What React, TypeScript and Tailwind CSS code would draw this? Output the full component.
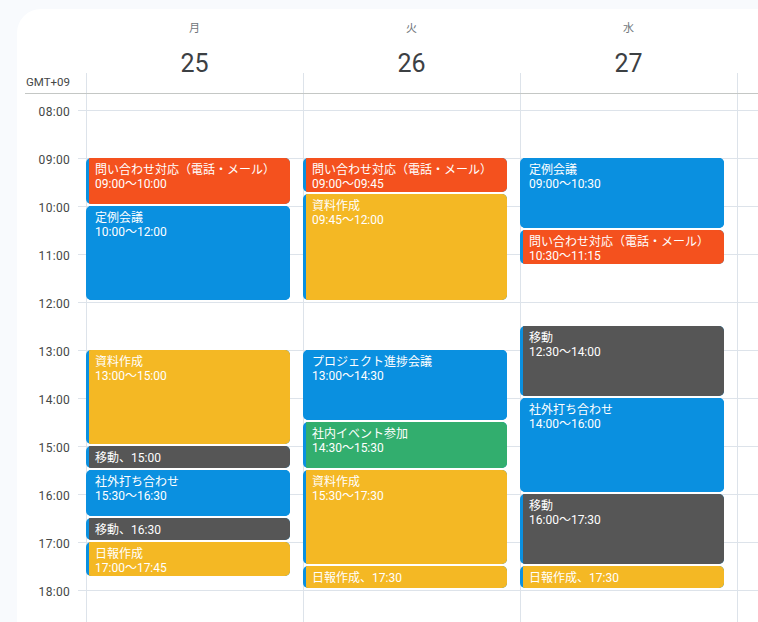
import React from "react";

type Ev = {
  title: string;
  start: number; // hours, decimal
  end: number;
  color: string;
  label?: string; // time range shown on second line
  inline?: string; // time shown after the title on one line
};

const HOUR_PX = 48;
const FIRST_HOUR = 8;
const TOP_OFFSET = 16;

const RED = "bg-[#f4511e]";
const BLUE = "bg-[#0a90e0]";
const YELLOW = "bg-[#f4b824]";
const GRAY = "bg-[#565656]";
const GREEN = "bg-[#32ae6e]";

const days: { wd: string; day: string; events: Ev[] }[] = [
  {
    wd: "月",
    day: "25",
    events: [
      { title: "問い合わせ対応（電話・メール）", start: 9, end: 10, color: RED, label: "09:00〜10:00" },
      { title: "定例会議", start: 10, end: 12, color: BLUE, label: "10:00〜12:00" },
      { title: "資料作成", start: 13, end: 15, color: YELLOW, label: "13:00〜15:00" },
      { title: "移動", start: 15, end: 15.5, color: GRAY, inline: "15:00" },
      { title: "社外打ち合わせ", start: 15.5, end: 16.5, color: BLUE, label: "15:30〜16:30" },
      { title: "移動", start: 16.5, end: 17, color: GRAY, inline: "16:30" },
      { title: "日報作成", start: 17, end: 17.75, color: YELLOW, label: "17:00〜17:45" },
    ],
  },
  {
    wd: "火",
    day: "26",
    events: [
      { title: "問い合わせ対応（電話・メール）", start: 9, end: 9.75, color: RED, label: "09:00〜09:45" },
      { title: "資料作成", start: 9.75, end: 12, color: YELLOW, label: "09:45〜12:00" },
      { title: "プロジェクト進捗会議", start: 13, end: 14.5, color: BLUE, label: "13:00〜14:30" },
      { title: "社内イベント参加", start: 14.5, end: 15.5, color: GREEN, label: "14:30〜15:30" },
      { title: "資料作成", start: 15.5, end: 17.5, color: YELLOW, label: "15:30〜17:30" },
      { title: "日報作成", start: 17.5, end: 18, color: YELLOW, inline: "17:30" },
    ],
  },
  {
    wd: "水",
    day: "27",
    events: [
      { title: "定例会議", start: 9, end: 10.5, color: BLUE, label: "09:00〜10:30" },
      { title: "問い合わせ対応（電話・メール）", start: 10.5, end: 11.25, color: RED, label: "10:30〜11:15" },
      { title: "移動", start: 12.5, end: 14, color: GRAY, label: "12:30〜14:00" },
      { title: "社外打ち合わせ", start: 14, end: 16, color: BLUE, label: "14:00〜16:00" },
      { title: "移動", start: 16, end: 17.5, color: GRAY, label: "16:00〜17:30" },
      { title: "日報作成", start: 17.5, end: 18, color: YELLOW, inline: "17:30" },
    ],
  },
];

const hours = Array.from({ length: 11 }, (_, i) => i + FIRST_HOUR);

function EventBlock({ ev }: { ev: Ev }) {
  const top = TOP_OFFSET + (ev.start - FIRST_HOUR) * HOUR_PX;
  const height = (ev.end - ev.start) * HOUR_PX - 2;
  return (
    <div
      className="absolute left-[-1px] right-[13px] flex overflow-hidden rounded-[5px] bg-[#0a90e0]"
      style={{ top, height }}
    >
      <div className={`ml-[3px] flex-1 overflow-hidden pl-[6px] pt-[5px] text-[12px] leading-[14px] text-white whitespace-nowrap ${ev.color}`}>
        {ev.inline ? (
          <div>
            {ev.title}、{ev.inline}
          </div>
        ) : (
          <>
            <div>{ev.title}</div>
            <div>{ev.label}</div>
          </>
        )}
      </div>
    </div>
  );
}

function DayColumn({ events }: { events: Ev[] }) {
  return (
    <div className="relative w-[217px] shrink-0 border-l border-[#dde3ea]">
      <div className="h-[16px]" />
      {hours.map((h) => (
        <div key={h} className="h-[48px] border-t border-[#dde3ea]" />
      ))}
      {events.map((ev, i) => (
        <EventBlock key={i} ev={ev} />
      ))}
    </div>
  );
}

export default function App() {
  return (
    <div className="h-[622px] w-[758px] overflow-hidden bg-[#f8fafd] pl-[17px] pt-[9px] font-['Roboto','Noto_Sans_CJK_JP',sans-serif]">
      <div className="w-[820px] h-[700px] rounded-tl-[24px] bg-white">
        {/* day headers */}
        <div className="flex h-[64px]">
          <div className="w-[69px] shrink-0" />
          {days.map((d) => (
            <div key={d.day} className="flex w-[217px] shrink-0 flex-col items-center pt-[13px]">
              <div className="text-[11px] leading-[14px] text-[#70757a]">{d.wd}</div>
              <div className="mt-[12px] text-[25px] leading-[32px] text-[#3c4043]">{d.day}</div>
            </div>
          ))}
        </div>

        {/* all-day row */}
        <div className="ml-[8px] flex h-[21px] border-b border-[#c4c7c5]">
          <div className="flex w-[61px] shrink-0 items-center justify-end pr-[16px] text-[11.5px] text-[#444746]">
            GMT+09
          </div>
          {[0, 1, 2, 3].map((i) => (
            <div key={i} className="w-[217px] shrink-0 border-l border-[#dde3ea]" />
          ))}
        </div>

        {/* time grid */}
        <div className="flex">
          <div className="w-[69px] shrink-0">
            <div className="h-[16px]" />
            {hours.map((h) => (
              <div key={h} className="flex h-[48px] items-start justify-end">
                <div className="mr-[8px] -mt-[6px] text-[12px] leading-[16px] tracking-[0.3px] text-[#444746]">
                  {String(h).padStart(2, "0")}:00
                </div>
                <div className="w-[8px] border-t border-[#dde3ea]" />
              </div>
            ))}
          </div>
          {days.map((d) => (
            <DayColumn key={d.day} events={d.events} />
          ))}
          <DayColumn events={[]} />
        </div>
      </div>
    </div>
  );
}
